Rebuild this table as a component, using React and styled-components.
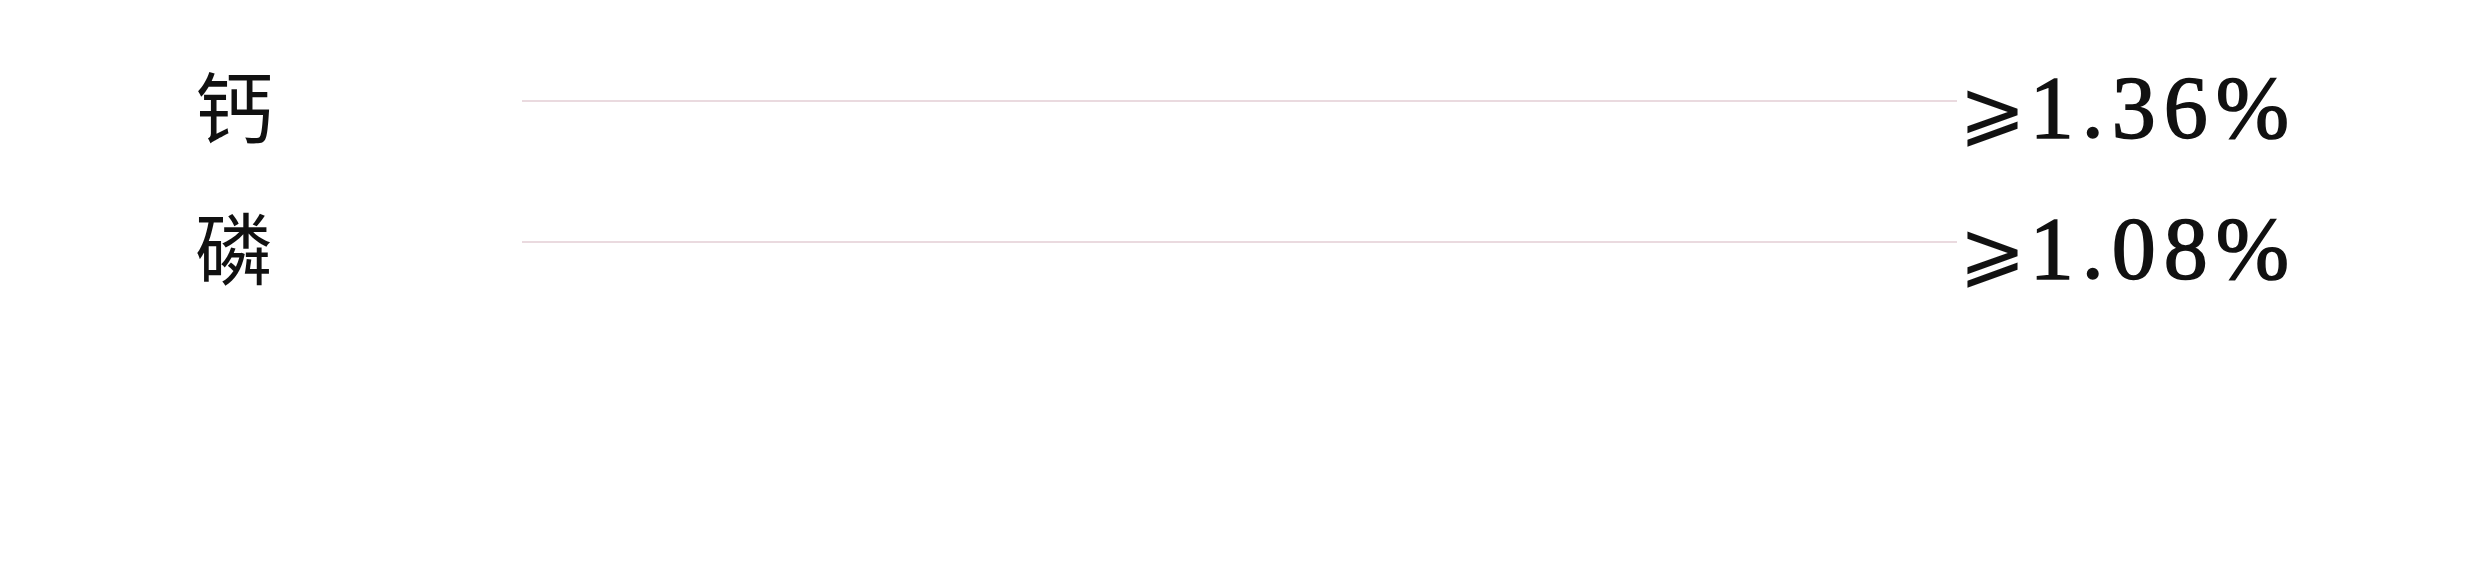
import React from 'react';
import styled, { createGlobalStyle } from 'styled-components';

const colors = { text: '#111111', rule: '#eadadf', bg: '#ffffff' };

const GlobalStyle = createGlobalStyle`
    html, body {
        margin: 0;
        padding: 0;
        background: ${colors.bg};
    }
    body {
        width: 2480px;
        height: 584px;
        overflow: hidden;
    }
`

const Table = styled.div`
    box-sizing: border-box;
    width: 2480px;
    height: 584px;
    padding: 34px 183px 0 195px;
    display: flex;
    flex-direction: column;
`

const Row = styled.div`
    display: flex;
    align-items: center;
    height: 141px;
`

const Label = styled.div`
    width: 327px;
    flex-shrink: 0;
    font-family: "Noto Sans CJK SC", sans-serif;
    font-size: 78px;
    font-weight: 400;
    line-height: 1;
    color: ${colors.text};
    margin-top: -2px;
`

const Rule = styled.div`
    flex: 1;
    height: 2px;
    background: ${colors.rule};
    margin-top: -8px;
`

const Value = styled.div`
    margin-left: 2px;
    display: flex;
    align-items: baseline;
    font-family: "Liberation Serif", serif;
    font-size: 88px;
    font-weight: 400;
    -webkit-text-stroke: 1.6px ${colors.text};
    line-height: 1;
    letter-spacing: 8px;
    color: ${colors.text};
    margin-top: 6px;
`

const Sign = styled.span`
    font-family: "DejaVu Sans", serif;
    font-size: 80px;
    letter-spacing: 4px;
    -webkit-text-stroke: 0;
`

const rows = [
    { name: '钙', value: '1.36%' },
    { name: '磷', value: '1.08%' },
]

export default function App() {
    return (
        <>
            <GlobalStyle />
            <Table>
                {rows.map((r, i) =>
                    <Row key={i}>
                        <Label>{r.name}</Label>
                        <Rule />
                        <Value><Sign>⩾</Sign>{r.value}</Value>
                    </Row>
                )}
            </Table>
        </>
    )
}
